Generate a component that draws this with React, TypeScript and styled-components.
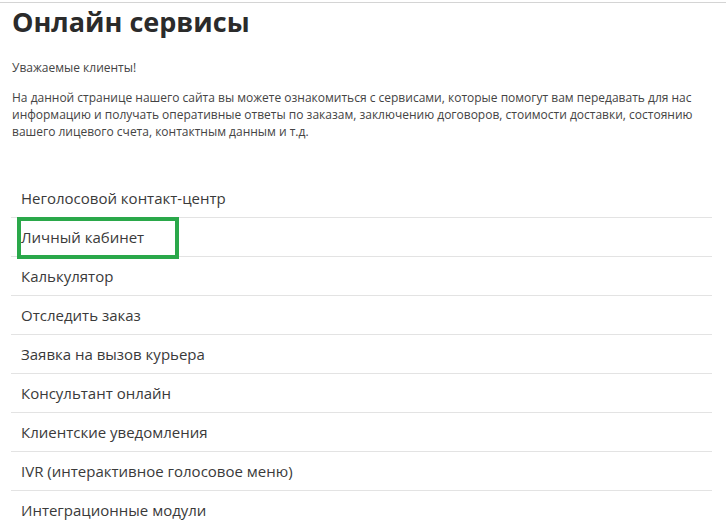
import React from "react";
import styled, { createGlobalStyle } from "styled-components";

const GlobalStyle = createGlobalStyle`
  html, body {
    margin: 0;
    padding: 0;
    background: #ffffff;
  }
  body {
    font-family: "Open Sans", "DejaVu Sans", sans-serif;
    color: #333333;
  }
`;

const services = [
  "Неголосовой контакт-центр",
  "Личный кабинет",
  "Калькулятор",
  "Отследить заказ",
  "Заявка на вызов курьера",
  "Консультант онлайн",
  "Клиентские уведомления",
  "IVR (интерактивное голосовое меню)",
  "Интеграционные модули",
];

export default function App() {
  return (
    <>
      <GlobalStyle />
      <Page>
        <Title>Онлайн сервисы</Title>
        <Intro>Уважаемые клиенты!</Intro>
        <Intro>
          На данной странице нашего сайта вы можете ознакомиться с сервисами, которые помогут вам передавать для нас
          информацию и получать оперативные ответы по заказам, заключению договоров, стоимости доставки, состоянию
          вашего лицевого счета, контактным данным и т.д.
        </Intro>
        <ServiceList>
          {services.map((name, i) => (
            <ServiceRow key={name} $highlighted={i === 1}>
              <ServiceLink href="#">{name}</ServiceLink>
            </ServiceRow>
          ))}
        </ServiceList>
      </Page>
    </>
  );
}

const Page = styled.div`
  border-top: 1px solid #d4d4d4;
  margin-top: 2px;
  padding: 0 12px 0 12px;
  height: 521px;
  overflow: hidden;
`;

const Title = styled.h1`
  margin: 1px 0 0 0;
  font-size: 27px;
  font-weight: 700;
  line-height: 36px;
  color: #2b2b2b;
`;

const Intro = styled.p`
  margin: 0 0 0 0;
  font-size: 12px;
  line-height: 17px;
  color: #444444;
  width: 698px;

  &:first-of-type {
    margin-top: 19px;
    margin-bottom: 13px;
  }
`;

const ServiceList = styled.ul`
  list-style: none;
  margin: 39px 0 0 -1px;
  padding: 0;
  width: 701px;
`;

const ServiceRow = styled.li<{ $highlighted?: boolean }>`
  position: relative;
  height: 38px;
  display: flex;
  align-items: center;
  padding-left: 10px;
  border-bottom: 1px solid #e3e3e3;

  ${({ $highlighted }) =>
    $highlighted &&
    `
    &::after {
      content: "";
      position: absolute;
      left: 6px;
      top: -1px;
      width: 154px;
      height: 34px;
      border: 4px solid #2aa84a;
    }
  `}
`;

const ServiceLink = styled.a`
  font-size: 15px;
  color: #3a3a3a;
  text-decoration: none;
`;
